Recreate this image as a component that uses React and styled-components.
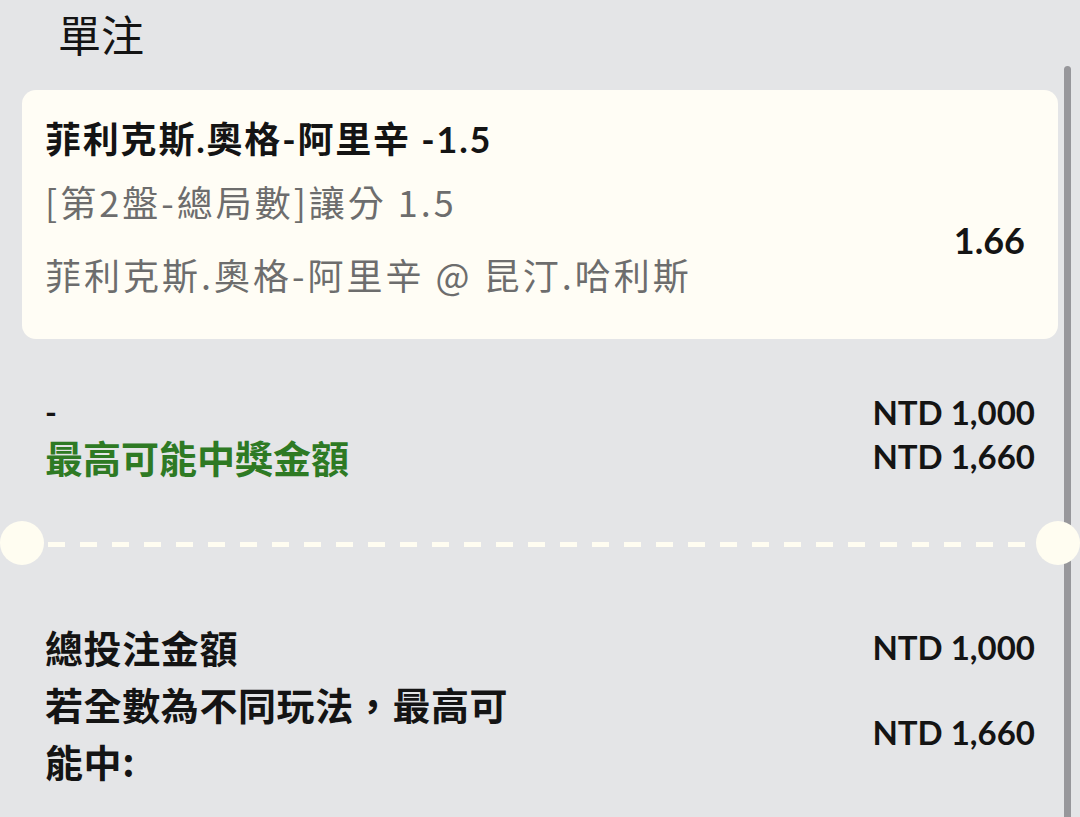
import React from "react";
import styled, { createGlobalStyle } from "styled-components";

const LATIN = `"Lato", "Noto Sans CJK TC", "Noto Sans", sans-serif`;
const CJK = `"Noto Sans CJK TC", "Noto Sans", sans-serif`;

const GlobalStyle = createGlobalStyle`
  html, body { margin: 0; padding: 0; background: #e4e5e7; }
  * { box-sizing: border-box; }
`;

const Page = styled.div`
  position: relative;
  width: 1080px;
  height: 817px;
  overflow: hidden;
  background: #e4e5e7;
  color: #141414;
`;

const Scrollbar = styled.div`
  position: absolute;
  top: 66px;
  left: 1064px;
  width: 7px;
  height: 800px;
  border-radius: 4px;
  background: #97979b;
`;

const Content = styled.div`
  position: relative;
  display: flex;
  flex-direction: column;
`;

const Header = styled.h1`
  margin: 0;
  padding: 3px 0 0 58px;
  font-family: ${CJK};
  font-weight: 400;
  font-size: 43px;
  line-height: 60px;
  color: #141414;
`;

const Card = styled.section`
  margin: 27px 22px 0;
  padding: 27px 33px 43px 23px;
  background: #fffdf5;
  border-radius: 14px;
`;

const BetTitle = styled.div`
  font-family: ${LATIN};
  font-weight: 700;
  font-size: 36px;
  letter-spacing: 1.8px;
  line-height: 44px;
  color: #141414;
`;

const BetBody = styled.div`
  margin-top: 18px;
  display: flex;
  align-items: center;
  justify-content: space-between;
`;

const BetInfo = styled.div`
  display: flex;
  flex-direction: column;
  gap: 29px;
`;

const InfoLine = styled.div`
  font-family: ${CJK};
  font-weight: 400;
  font-size: 36px;
  letter-spacing: 3px;
  line-height: 44px;
  color: #6d6d6d;
`;

const Odds = styled.div`
  padding-top: 4px;
  font-family: ${LATIN};
  font-weight: 700;
  font-size: 36px;
  line-height: 44px;
  color: #141414;
`;

const Summary = styled.div`
  margin: ${(p) => p.$top}px 45px 0 45px;
  display: flex;
  flex-direction: column;
`;

const Row = styled.div`
  display: flex;
  justify-content: space-between;
  align-items: ${(p) => p.$align || "flex-start"};
`;

const Dash = styled.span`
  font-family: ${LATIN};
  font-weight: 700;
  font-size: 32px;
  line-height: 44px;
`;

const Amount = styled.span`
  font-family: ${LATIN};
  font-weight: 700;
  font-size: 33px;
  line-height: 44px;
  color: #141414;
  white-space: nowrap;
`;

const WinLabel = styled.span`
  padding-top: 1px;
  font-family: ${CJK};
  font-weight: 700;
  font-size: 38px;
  line-height: 44px;
  color: #2e7a24;
`;

const TotalLabel = styled.span`
  width: 480px;
  font-family: ${CJK};
  font-weight: 700;
  font-size: 38px;
  letter-spacing: 0.6px;
  line-height: 57px;
  color: #141414;
`;

const Divider = styled.div`
  margin-top: 42px;
  display: flex;
  align-items: center;
  height: 44px;
`;

const Notch = styled.span`
  flex: none;
  width: 44px;
  height: 44px;
  border-radius: 50%;
  background: #fffdf1;
`;

const DashedLine = styled.span`
  flex: 1;
  height: 5px;
  margin: 2px 4px 0;
  background: repeating-linear-gradient(
    to right,
    #fffdf1 0 17px,
    transparent 17px 32px
  );
`;

export default function App() {
  return (
    <Page>
      <GlobalStyle />
      <Scrollbar />
      <Content>
        <Header>單注</Header>
        <Card>
          <BetTitle>菲利克斯.奧格-阿里辛 -1.5</BetTitle>
          <BetBody>
            <BetInfo>
              <InfoLine>[第2盤-總局數]讓分 1.5</InfoLine>
              <InfoLine>菲利克斯.奧格-阿里辛 @ 昆汀.哈利斯</InfoLine>
            </BetInfo>
            <Odds>1.66</Odds>
          </BetBody>
        </Card>

        <Summary $top={51}>
          <Row>
            <Dash>-</Dash>
            <Amount>NTD 1,000</Amount>
          </Row>
          <Row>
            <WinLabel>最高可能中獎金額</WinLabel>
            <Amount>NTD 1,660</Amount>
          </Row>
        </Summary>

        <Divider>
          <Notch />
          <DashedLine />
          <Notch />
        </Divider>

        <Summary $top={53}>
          <Row $align="center">
            <TotalLabel>總投注金額</TotalLabel>
            <Amount>NTD 1,000</Amount>
          </Row>
          <Row $align="center">
            <TotalLabel>若全數為不同玩法，最高可能中:</TotalLabel>
            <Amount>NTD 1,660</Amount>
          </Row>
        </Summary>
      </Content>
    </Page>
  );
}
